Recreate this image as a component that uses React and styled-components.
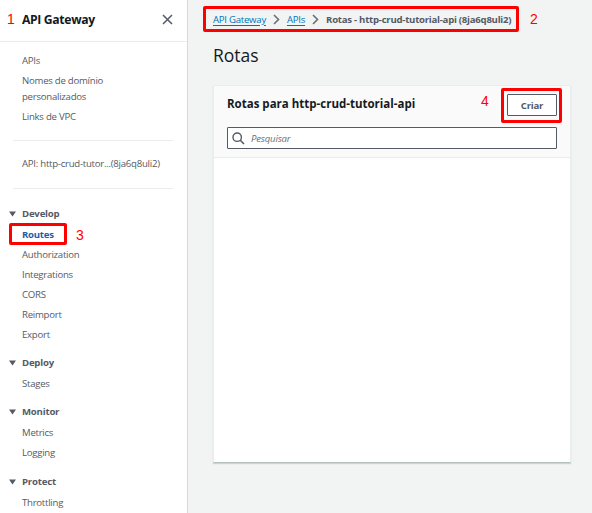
import React from "react";
import styled, { createGlobalStyle } from "styled-components";

const Global = createGlobalStyle`
  html, body { margin: 0; padding: 0; }
  body { font-family: "Open Sans", "Noto Sans", sans-serif; background: #f2f3f3; }
  * { box-sizing: border-box; }
`;

const Page = styled.div`
  display: flex;
  width: 592px;
  height: 513px;
  overflow: hidden;
`;

const Sidebar = styled.aside`
  width: 188px;
  flex: none;
  background: #fff;
  border-right: 1px solid #d5dbdb;
  display: flex;
  flex-direction: column;
  position: relative;
  overflow: hidden;
  & > * { flex-shrink: 0; }
`;

const SideHeader = styled.div`
  height: 42px;
  border-bottom: 1px solid #eaeded;
  display: flex;
  align-items: center;
  justify-content: space-between;
  padding: 0 14px 2px 22px;
`;

const AppTitle = styled.div`
  font-size: 12.2px;
  font-weight: 700;
  color: #16191f;
  letter-spacing: -0.35px;
`;

const Mark = styled.span`
  position: absolute;
  color: #ff0000;
  font-family: "Liberation Sans", Arial, sans-serif;
  font-size: 14px;
  line-height: 1;
  left: ${(p) => p.$x}px;
  top: ${(p) => p.$y}px;
`;

const RedBox = styled.div`
  position: absolute;
  border: 3px solid #ff0000;
  border-radius: 2px;
  left: ${(p) => p.$x}px;
  top: ${(p) => p.$y}px;
  width: ${(p) => p.$w}px;
  height: ${(p) => p.$h}px;
  pointer-events: none;
`;

const NavList = styled.div`
  display: flex;
  flex-direction: column;
  padding-top: 9px;
`;

const NavItem = styled.div`
  padding: 2px 22px;
  font-size: 9.6px;
  letter-spacing: -0.25px;
  line-height: 16px;
  white-space: nowrap;
  color: ${(p) => (p.$active ? "#1b5fa8" : "#545b64")};
  font-weight: ${(p) => (p.$active ? 700 : 400)};
`;

const Divider = styled.div`
  height: 1px;
  background: #eaeded;
  margin: ${(p) => p.$m || "13px 14px 13px 13px"};
`;

const Section = styled.div`
  display: flex;
  flex-direction: column;
  margin-top: ${(p) => p.$mt || 8}px;
`;

const SectionHead = styled.div`
  display: flex;
  align-items: center;
  gap: 6px;
  padding: 2px 0 2px 9px;
  margin-bottom: 1px;
  font-size: 9.6px;
  letter-spacing: -0.2px;
  line-height: 16px;
  font-weight: 700;
  color: #545b64;
`;

const Main = styled.main`
  flex: 1;
  background: #f2f3f3;
  padding: 0 21px 0 25px;
  display: flex;
  flex-direction: column;
  position: relative;
`;

const Crumbs = styled.nav`
  display: flex;
  align-items: center;
  height: 38px;
  padding-left: 0;
  font-size: 9.6px;
  letter-spacing: -0.25px;
  gap: 7px;
`;

const CrumbLink = styled.a`
  color: #0073bb;
  text-decoration: underline;
  text-underline-offset: 2px;
`;

const CrumbCurrent = styled.span`
  color: #545b64;
  font-weight: 700;
`;

const PageTitle = styled.h1`
  margin: 0;
  font-size: 17.5px;
  font-weight: 400;
  color: #16191f;
  line-height: 34px;
`;

const Card = styled.section`
  margin-top: 13px;
  height: 378px;
  background: #fff;
  border: 1px solid #eaeded;
  border-bottom-color: #b5c0c0;
  box-shadow: 0 1px 1px 0 rgba(0, 28, 36, 0.15);
  display: flex;
  flex-direction: column;
  position: relative;
`;

const CardHeader = styled.div`
  background: #fafafa;
  border-bottom: 1px solid #eaeded;
  padding: 8px 13px 8px 13px;
  display: flex;
  flex-direction: column;
  gap: 11px;
`;

const HeaderRow = styled.div`
  display: flex;
  align-items: center;
  justify-content: space-between;
  height: 22px;
`;

const CardTitle = styled.h2`
  margin: -4px 0 0;
  font-size: 11.5px;
  font-weight: 700;
  color: #16191f;
`;

const Button = styled.button`
  width: 50px;
  height: 22px;
  border: 1px solid #545b64;
  border-radius: 1px;
  background: #fff;
  color: #545b64;
  font-family: inherit;
  font-size: 9.6px;
  letter-spacing: -0.2px;
  font-weight: 700;
  padding: 0;
`;

const Search = styled.div`
  height: 22px;
  border: 1px solid #545b64;
  border-radius: 1px;
  background: #fff;
  display: flex;
  align-items: center;
  gap: 6px;
  padding-left: 4px;
`;

const SearchText = styled.span`
  font-size: 9.6px;
  letter-spacing: -0.2px;
  font-style: italic;
  color: #687078;
`;

const Tri = () => (
  <svg width="7" height="6" viewBox="0 0 7 6">
    <path d="M0 0.5 H7 L3.5 5.5 Z" fill="#545b64" />
  </svg>
);

const Chevron = () => (
  <svg width="7" height="11" viewBox="0 0 7 11">
    <path d="M1 1 L5.5 5.5 L1 10" stroke="#687078" strokeWidth="1.6" fill="none" />
  </svg>
);

const CloseIcon = () => (
  <svg width="11" height="11" viewBox="0 0 11 11">
    <path d="M1 1 L10 10 M10 1 L1 10" stroke="#545b64" strokeWidth="1.5" />
  </svg>
);

const SearchIcon = () => (
  <svg width="13" height="13" viewBox="0 0 13 13">
    <circle cx="5.2" cy="5.2" r="4.2" stroke="#545b64" strokeWidth="1.4" fill="none" />
    <path d="M8.3 8.3 L12 12" stroke="#545b64" strokeWidth="1.6" />
  </svg>
);

const sections = [
  { name: "Develop", items: ["Routes", "Authorization", "Integrations", "CORS", "Reimport", "Export"], mt: 15 },
  { name: "Deploy", items: ["Stages"] },
  { name: "Monitor", items: ["Metrics", "Logging"] },
  { name: "Protect", items: ["Throttling"], mt: 9 },
];

export default function App() {
  return (
    <Page>
      <Global />
      <Sidebar>
        <SideHeader>
          <AppTitle>API Gateway</AppTitle>
          <CloseIcon />
        </SideHeader>
        <NavList>
          <NavItem>APIs</NavItem>
          <NavItem>Nomes de domínio<br />personalizados</NavItem>
          <NavItem>Links de VPC</NavItem>
        </NavList>
        <Divider />
        <NavItem>API: http-crud-tutor...(8ja6q8uli2)</NavItem>
        <Divider $m="14px 14px 0 13px" />
        {sections.map((s) => (
          <Section key={s.name} $mt={s.mt}>
            <SectionHead>
              <Tri />
              {s.name}
            </SectionHead>
            {s.items.map((it) => (
              <NavItem key={it} $active={it === "Routes"}>{it}</NavItem>
            ))}
          </Section>
        ))}
        <Mark $x={7} $y={12}>1</Mark>
        <RedBox $x={9} $y={223} $w={58} $h={22} />
        <Mark $x={76} $y={228}>3</Mark>
      </Sidebar>
      <Main>
        <Crumbs>
          <CrumbLink>API Gateway</CrumbLink>
          <Chevron />
          <CrumbLink>APIs</CrumbLink>
          <Chevron />
          <CrumbCurrent>Rotas - http-crud-tutorial-api (8ja6q8uli2)</CrumbCurrent>
        </Crumbs>
        <RedBox $x={15} $y={6} $w={316} $h={26} />
        <Mark $x={342} $y={12}>2</Mark>
        <PageTitle>Rotas</PageTitle>
        <Card>
          <CardHeader>
            <HeaderRow>
              <CardTitle>Rotas para http-crud-tutorial-api</CardTitle>
              <Button>Criar</Button>
            </HeaderRow>
            <Search>
              <SearchIcon />
              <SearchText>Pesquisar</SearchText>
            </Search>
          </CardHeader>
          <RedBox $x={287} $y={2} $w={61} $h={35} />
          <Mark $x={267} $y={8}>4</Mark>
        </Card>
      </Main>
    </Page>
  );
}
